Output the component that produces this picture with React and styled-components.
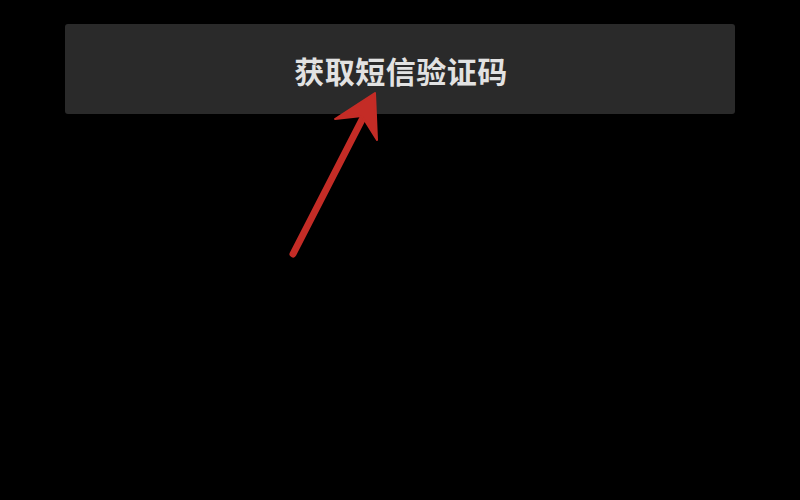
import React from 'react';
import styled, { createGlobalStyle } from 'styled-components';

const GlobalStyle = createGlobalStyle`
  html, body {
    margin: 0;
    padding: 0;
    background: #000;
  }
  body {
    width: 800px;
    height: 500px;
    overflow: hidden;
    font-family: "Noto Sans CJK SC", "Noto Sans", sans-serif;
  }
`;

const Screen = styled.div`
  position: relative;
  width: 800px;
  height: 500px;
  background: #000;
  padding: 24px 65px 0;
  box-sizing: border-box;
`;

const SmsButton = styled.button`
  display: flex;
  align-items: center;
  justify-content: center;
  width: 100%;
  height: 90px;
  padding: 2px 0 0 2px;
  box-sizing: border-box;
  border: none;
  border-radius: 3px;
  background: #2a2a2a;
  color: #e2e2e2;
  font-family: "Noto Sans CJK SC", "Noto Sans", sans-serif;
  font-size: 30px;
  font-weight: 700;
  letter-spacing: 0.5px;
`;

const Pointer = styled.svg`
  position: absolute;
  left: 0;
  top: 0;
  pointer-events: none;
`;

export default function App() {
  return (
    <>
      <GlobalStyle />
      <Screen>
        <SmsButton>获取短信验证码</SmsButton>
        <Pointer width="800" height="500" viewBox="0 0 800 500">
          <line x1="293" y1="254" x2="368" y2="108" stroke="#c42c26" strokeWidth="7" strokeLinecap="round" />
          <path d="M375 93 L335 119 L362 116 L377 140 Z" fill="#c42c26" stroke="#c42c26" strokeWidth="2" strokeLinejoin="round" />
        </Pointer>
      </Screen>
    </>
  );
}
